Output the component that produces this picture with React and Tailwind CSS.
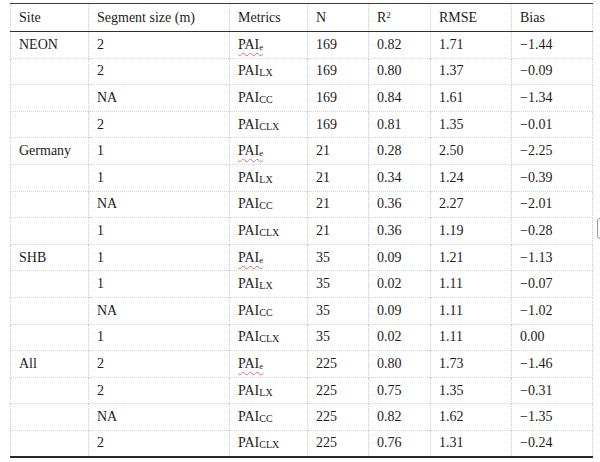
import React from "react";

const rows = [
  ["NEON", "2", "e", "169", "0.82", "1.71", "\u22121.44"],
  ["", "2", "LX", "169", "0.80", "1.37", "\u22120.09"],
  ["", "NA", "CC", "169", "0.84", "1.61", "\u22121.34"],
  ["", "2", "CLX", "169", "0.81", "1.35", "\u22120.01"],
  ["Germany", "1", "e", "21", "0.28", "2.50", "\u22122.25"],
  ["", "1", "LX", "21", "0.34", "1.24", "\u22120.39"],
  ["", "NA", "CC", "21", "0.36", "2.27", "\u22122.01"],
  ["", "1", "CLX", "21", "0.36", "1.19", "\u22120.28"],
  ["SHB", "1", "e", "35", "0.09", "1.21", "\u22121.13"],
  ["", "1", "LX", "35", "0.02", "1.11", "\u22120.07"],
  ["", "NA", "CC", "35", "0.09", "1.11", "\u22121.02"],
  ["", "1", "CLX", "35", "0.02", "1.11", "0.00"],
  ["All", "2", "e", "225", "0.80", "1.73", "\u22121.46"],
  ["", "2", "LX", "225", "0.75", "1.35", "\u22120.31"],
  ["", "NA", "CC", "225", "0.82", "1.62", "\u22121.35"],
  ["", "2", "CLX", "225", "0.76", "1.31", "\u22120.24"],
];

const widths = ["w-[78px]", "w-[141px]", "w-[78px]", "w-[61px]", "w-[62px]", "w-[81px]", "w-[81px]"];

const cell =
  "border-x border-dotted border-x-[#cfcfcf] p-0 pl-[8px] align-middle text-left font-normal leading-none text-[14px] text-[#1c1c1c] font-[family-name:'Liberation_Serif','Times_New_Roman',serif]";

const Metric = ({ sub }) => {
  if (sub === "e") {
    return (
      <span className="underline decoration-wavy decoration-[#e07070] decoration-1 underline-offset-[3px] [text-decoration-skip-ink:none]">
        PAI<span className="relative top-[1px] text-[9px]">e</span>
      </span>
    );
  }
  return (
    <span>
      PAI<span className="relative top-[1px] text-[10px]">{sub}</span>
    </span>
  );
};

const App = () => {
  return (
    <div className="relative w-[600px] h-[462px] bg-white pt-[3px] pl-[10px]">
      <table className="table-fixed border-collapse w-[582px] border-t-[1.5px] border-t-[#3a3a3a] border-b-2 border-b-[#2a2a2a]">
        <colgroup>
          {widths.map((w, i) => (
            <col key={i} className={w} />
          ))}
        </colgroup>
        <thead>
          <tr className="h-[28px] border-b border-b-[#2f2f2f]">
            <th className={cell}>Site</th>
            <th className={cell}>Segment size (m)</th>
            <th className={cell}>Metrics</th>
            <th className={cell}>N</th>
            <th className={cell}>
              R<span className="relative top-[-4px] text-[9px]">2</span>
            </th>
            <th className={cell}>RMSE</th>
            <th className={cell}>Bias</th>
          </tr>
        </thead>
        <tbody>
          {rows.map((r, i) => (
            <tr
              key={i}
              className={`h-[26.6px] ${i < rows.length - 1 ? "border-b border-dotted border-b-[#d6d6d6]" : ""}`}
            >
              <td className={cell}>{r[0]}</td>
              <td className={cell}>{r[1]}</td>
              <td className={cell}>
                <Metric sub={r[2]} />
              </td>
              <td className={cell}>{r[3]}</td>
              <td className={cell}>{r[4]}</td>
              <td className={cell}>{r[5]}</td>
              <td className={cell}>{r[6]}</td>
            </tr>
          ))}
        </tbody>
      </table>
      {/* scroll handle peeking in at the right edge */}
      <div className="absolute left-[597px] top-[218px] w-[10px] h-[21px] rounded-[3px] border border-[#9a9a9a] bg-white" />
    </div>
  );
};

export default App;
